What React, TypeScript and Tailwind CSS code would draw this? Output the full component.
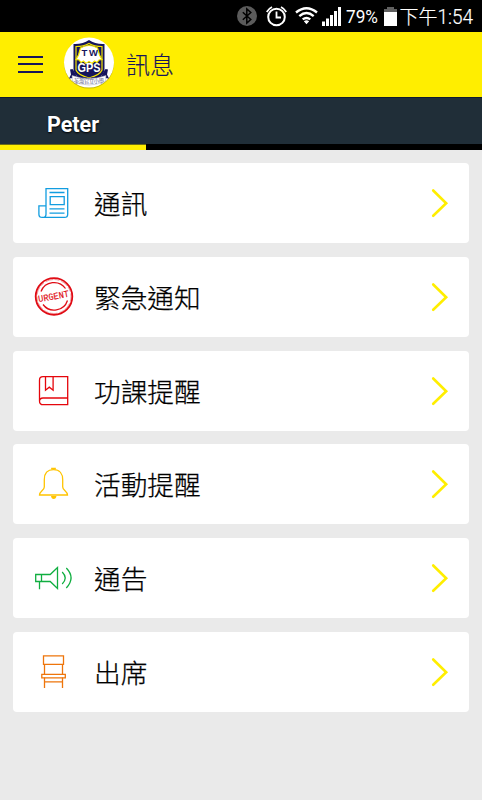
import React from 'react';

const cjk = "font-['Roboto','Noto_Sans_CJK_TC',sans-serif]";

function StatusBar() {
  return (
    <header className="flex h-8 shrink-0 items-center bg-black text-white">
      <svg className="h-8 w-[252px] ml-[230px] block" viewBox="0 0 252 32">
        <circle cx="17" cy="16" r="10" fill="#5b5b5b" />
        <path d="M12.8 12.2l8 7.3-4 3.5V9l4 3.5-8 7.3" fill="none" stroke="#000" strokeWidth="1.5" />
        <g fill="none" stroke="#fff" strokeWidth="2">
          <circle cx="46.5" cy="17" r="8.3" />
          <path d="M46.5 11.5V17.5h4.5M36.8 12a11 11 0 0 1 5.2-5M56.2 12a11 11 0 0 0-5.2-5" strokeWidth="1.8" />
          <path d="M66 12.5q10.5-8.5 21 0M69.3 16.1q7.2-6 14.4 0M72.7 19.4q3.8-3 7.6 0" strokeWidth="2.4" />
        </g>
        <path d="M73.8 21.3q2.7-2 5.4 0l-2.7 3zM92 21.5h3V26h-3zM96 18.5h3V26h-3zM100 15h3v11h-3zM104 11h3v15h-3zM108 7h3v19h-3z" fill="#fff" />
        <path d="M157 7h7v2h3v4h-13V9h3z" fill="#606060" />
        <path d="M154 12h13v14h-13z" fill="#fff" />
        <text x="116" y="23.2" fill="#fff" fontSize="18" textLength="32" lengthAdjust="spacingAndGlyphs" className={cjk}>79%</text>
        <text x="169.5" y="23.8" fill="#fff" stroke="#fff" strokeWidth=".2" fontSize="19.5" textLength="73.5" lengthAdjust="spacingAndGlyphs" className={`${cjk} font-light`}>下午1:54</text>
      </svg>
    </header>
  );
}

function Logo() {
  return (
    <svg viewBox="0 0 60 60" className="ml-4 h-[60px] w-[60px]">
      <circle cx="29" cy="29.6" r="25" fill="#8e8700" opacity=".5" />
      <circle cx="29" cy="28.6" r="25" fill="#fff" />
      <path d="M13.5 10q9 .5 15.5-4 6.5 4.5 15.5 4v27q-2 7-15.5 10Q15.5 44 13.5 37z" fill="#15145c" />
      <path d="M16 12.5q8 0 13-3 5 3 13 3V36q-2 5-13 8Q18 41 16 36z" fill="none" stroke="#f4e600" strokeWidth="1.2" />
      <path d="M20.5 14q8.5-5 17 0l2 7 2.5 4.5-3 .5-2 2.5-2.5-1.5-2.500 2.500-3-2-3 2-2.500-2.500-2.500 1.500-2-2.500-3-.5 2.500-4.500z" fill="#fff" stroke="#f4e600" strokeWidth="1.2" />
      <path d="M10 35.5l2.5-.5 4 6.500 12.500 2.500 12.500-2.500 4-6.500 2.500.5-1 5 2 4-4-.5-2 4H15l-2-4-4 .5 2-4z" fill="#15145c" />
      <path d="M12 41.5q17 6 34 0l-.5 5.5q-16.500 8-33 0z" fill="#fff" stroke="#aaaac0" strokeWidth=".5" />
      <g fontFamily="Liberation Sans" fontWeight="bold" textAnchor="middle">
        <text x="24.5" y="22.3" fill="#15145c" fontSize="9.5">T</text>
        <text x="33.5" y="22.3" fill="#15145c" fontSize="9.5">W</text>
        <text x="29" y="38.2" fill="#fff" fontSize="12" textLength="23" lengthAdjust="spacingAndGlyphs">GPS</text>
      </g>
      <text x="14" y="49" fill="#5c5c8c" fontSize="5.2" textLength="30" className={cjk}>荃灣官立小學</text>
    </svg>
  );
}

const items = [
  { label: '通訊', color: '#129de0', box: '0 -2.2 60 60', icon: <>
    <path d="M21 31V13.5h21.7V39q0 3.2-3.2 3.2H17.2q-3.3 0-3.3-3.2v-8.4H21V39q0 3.2-3.3 3.2" />
    <path d="M24.5 17.3h15M25.2 21.5h14v8H25.2zM24.5 33.7h15M24.5 38h15" /></> },
  { label: '緊急通知', color: '#e00b14', box: '0 0 60 60', icon: <>
    <circle cx="29" cy="29.5" r="18.3" strokeWidth="1.8" />
    <path d="M16 24.5a14 14 0 0 1 24.5-3M18 37.5a14 14 0 0 0 24.5-4" />
    <circle cx="29" cy="29.5" r="17" strokeWidth=".4" strokeDasharray="5 2 8 1" />
    <text x="28.7" y="32.4" transform="rotate(-10 29 30)" textAnchor="middle" stroke="currentColor" strokeWidth=".15" fill="currentColor" fontSize="9.5" fontFamily="Liberation Mono" textLength="31" lengthAdjust="spacingAndGlyphs">URGENT</text></> },
  { label: '功課提醒', color: '#e5060c', box: '0 -1.2 60 60', icon: <>
    <path d="M42.7 14.5H18q-3.5 0-3.5 3.5v20.7q0 3.8 3.8 3.8h24.4zM14.5 39q0-3.2 3.5-3.2h24.7M20.5 14.5V28l3.8-3 3.8 3V14.5" /></> },
  { label: '活動提醒', color: '#ffc400', box: '0 -.5 60 60', icon: <>
    <path d="M28.5 15.2c-6.5 0-9.2 4.5-9.2 10v7.2c0 3.6-4.8 4.2-4.8 8.1h28c0-3.9-4.8-4.5-4.8-8.1v-7.2c0-5.5-2.7-10-9.2-10z" />
    <path d="M27 15v-1h3v1" strokeWidth="1.7" /><path d="M26 41.5h5.5q-.5 3-2.8 3T26 41.5z" fill="currentColor" stroke="none" /></> },
  { label: '通告', color: '#10ae40', box: '0 0 60 60', icon: <>
    <path d="M10.7 26.5h14.5l7.3-7v21l-7.3-7H10.7zM16.5 26.5v7M14.5 33.5v7.7M37.2 24q6 6 0 12M41.3 20q9.5 9.8 0 20" /></> },
  { label: '出席', color: '#ee750b', box: '0 -.4 60 60', icon: <>
    <path d="M18.5 13.5h20V22h-20zM19.5 22v10M37.5 22v10M19.5 35v10.5M37.5 35v10.5M19.5 39.5h18" />
    <path d="M16.8 32h23.5v3.5H16.8z" /></> },
];

export default function App() {
  return (
    <div className={`flex h-[800px] w-[482px] flex-col overflow-hidden bg-[#eaeaea] ${cjk}`}>
      <StatusBar />
      <div className="flex h-[65px] shrink-0 items-center bg-[#ffee00] pb-[1px] pl-[18px] text-[#17165b]">
        <div className="flex w-[26px] flex-col gap-[5.5px]">
          <span className="h-[2px] w-[25px] bg-[#17165b]" />
          <span className="h-[2px] w-[25px] bg-[#17165b]" />
          <span className="h-[2px] w-[25px] bg-[#17165b]" />
        </div>
        <Logo />
        <h1 className="ml-[6px] pt-[3px] text-[24px] font-light leading-8 [-webkit-text-stroke:0.15px_#17165b]">訊息</h1>
      </div>
      <nav className="flex h-[53px] shrink-0 flex-col border-t border-[#101a2d] bg-[#202e38]">
        <div className="flex flex-1 items-center pl-[47px] pt-[8px]">
          <span className="text-[21.5px] font-bold leading-6 text-white [text-shadow:0_1px_2px_#000]">Peter</span>
        </div>
        <div className="flex h-[6px] bg-black"><span className="w-[146px] border-t border-[#6d6d16] bg-[#ffee00]" /></div>
      </nav>
      <main className="flex flex-col gap-[13.65px] px-[13px] pt-[13.4px]">
        {items.map((item) => (
          <button key={item.label} className="flex h-[80px] w-[456px] shrink-0 items-center rounded-[4px] bg-white pl-3 text-left">
            <svg viewBox={item.box} className="h-[60px] w-[60px] shrink-0" color={item.color} fill="none" stroke="currentColor" strokeWidth="1.3">
              {item.icon}
            </svg>
            <span className="ml-[9px] flex-1 pt-[4px] text-[26.67px] font-light leading-10 text-black [-webkit-text-stroke:0.25px_#000]">{item.label}</span>
            <svg viewBox="0 0 24 40" className="mr-[16px] h-10 w-6" fill="none" stroke="#ffee00" strokeWidth="2.6">
              <path d="M4.2 7.5l13 12.8-13 12.5" strokeLinecap="round" />
            </svg>
          </button>
        ))}
      </main>
    </div>
  );
}
